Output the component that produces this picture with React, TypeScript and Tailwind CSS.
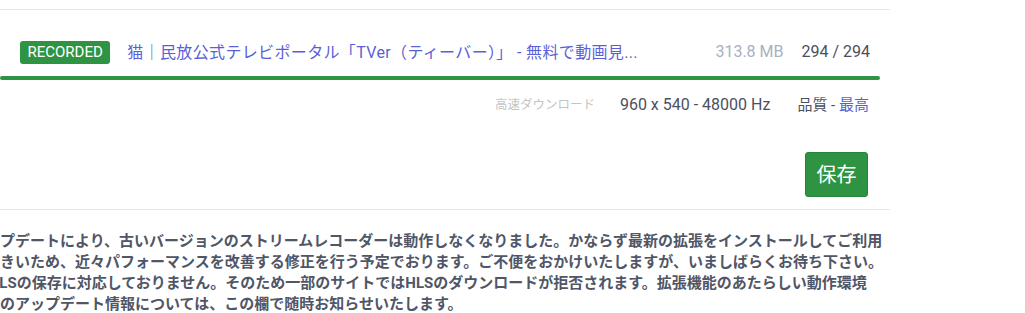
import React from 'react'

const font = 'font-["Roboto","Noto_Sans_CJK_JP",sans-serif]'

const Badge = () => (
  <span className="inline-flex h-[23px] items-center rounded-[3px] bg-[#2e9444] px-[7.5px] text-[15px] leading-none text-white">
    RECORDED
  </span>
)

const Notice = () => (
  <p className="ml-[-30px] whitespace-nowrap text-[15px] font-bold leading-[21px] text-[#505666]">
    アップデートにより、古いバージョンのストリームレコーダーは動作しなくなりました。かならず最新の拡張をインストールしてご利用
    <br />
    が大きいため、近々パフォーマンスを改善する修正を行う予定でおります。ご不便をおかけいたしますが、いましばらくお待ち下さい。
    <br />
    は HLSの保存に対応しておりません。そのため一部のサイトではHLSのダウンロードが拒否されます。拡張機能のあたらしい動作環境
    <br />
    今後のアップデート情報については、この欄で随時お知らせいたします。
  </p>
)

export default function App() {
  return (
    <div className={`h-[313px] w-[1025px] overflow-hidden bg-white ${font}`}>
      <div className="w-[890px]">
        <div className="h-[10px] border-b border-[#e8e8e8]" />

        {/* recorded item */}
        <div className="flex items-center px-[20px] pt-[30px]">
          <Badge />
          <span className="ml-[17px] text-[16px] leading-[23px] tracking-[0.35px] text-[#5a5fd8]">
            猫｜民放公式テレビポータル「TVer（ティーバー）」 - 無料で動画見...
          </span>
          <span className="ml-auto text-[16px] text-[#a9b0c0]">313.8 MB</span>
          <span className="ml-[18px] text-[16px] text-[#4b5060]">294 / 294</span>
        </div>

        <div className="mr-[10px] mt-[12px] h-[4px] rounded-full bg-[#2e9444]" />

        <div className="mt-[15px] flex items-center justify-end pr-[21px] leading-[20px]">
          <span className="text-[12.5px] text-[#c4c4c4]">高速ダウンロード</span>
          <span className="ml-[25px] text-[16px] text-[#4b5060]">960 x 540 - 48000 Hz</span>
          <span className="ml-[27px] text-[15px] text-[#4b5060]">
            品質 - <span className="text-[#5a5fd8]">最高</span>
          </span>
        </div>

        <div className="flex justify-end border-b border-[#e8e8e8] pb-[12px] pr-[22px] pt-[37px]">
          <button
            type="button"
            className="flex h-[45px] w-[63px] items-center justify-center rounded-[3px] border border-[#27853a] bg-[#2e9444] text-[20px] text-white"
          >
            保存
          </button>
        </div>
      </div>

      <div className="mt-[21px]">
        <Notice />
      </div>
    </div>
  )
}
